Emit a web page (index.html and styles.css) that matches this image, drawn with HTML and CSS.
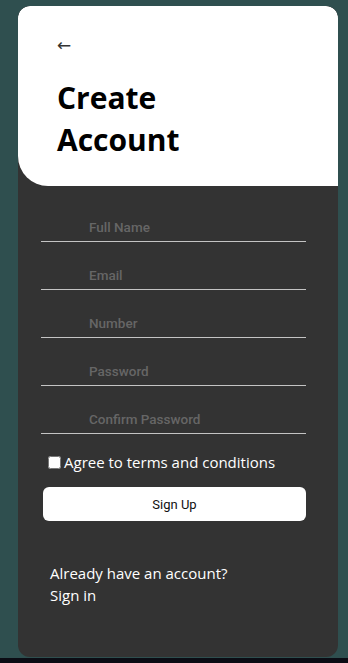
FILE: index.html
```html
<!DOCTYPE html>
<html>
<head>
  <title>Create Account</title>
  <link rel="stylesheet" href="styles.css">
</head>
<body>
  <div class="page">
    <div class="card">
      <div class="card-head">
        <a class="back" href="#">&larr;</a>
        <h1>Create<br>Account</h1>
      </div>
      <form class="card-body">
        <input class="field" type="text" placeholder="Full Name">
        <input class="field" type="email" placeholder="Email">
        <input class="field" type="tel" placeholder="Number">
        <input class="field" type="password" placeholder="Password">
        <input class="field" type="password" placeholder="Confirm Password">
        <label class="agree"><input type="checkbox">Agree to terms and conditions</label>
        <button class="signup-btn" type="button">Sign Up</button>
        <p class="login-link">Already have an account?<br>Sign in</p>
      </form>
    </div>
    <div class="spacer"></div>
    <div class="taskbar"></div>
  </div>
</body>
</html>
```

FILE: styles.css
```css
body {
  margin: 0;
  background-color: darkslategray;
  font-family: "Open Sans", sans-serif;
}
.page {
  height: 663px;
  display: flex;
  flex-direction: column;
}
.card {
  width: 320px;
  height: 651px;
  margin: 6px 0 0 18px;
  background: #333;
  border-radius: 12px;
  overflow: hidden;
}
.card-head {
  background: white;
  height: 180px;
  padding: 28px 0 0 39px;
  box-sizing: border-box;
  border-radius: 12px 12px 0 30px;
}
.back {
  display: block;
  color: #333;
  text-decoration: none;
  font-family: "DejaVu Sans", sans-serif;
  font-size: 17px;
  line-height: 22px;
}
.card-head h1 {
  margin: 21px 0 0;
  font-size: 30px;
  font-weight: 700;
  line-height: 42px;
  color: #000;
}
.card-body {
  display: flex;
  flex-direction: column;
  padding: 23px 32px 0 23px;
}
.field {
  box-sizing: border-box;
  height: 33px;
  margin-bottom: 15px;
  padding: 6px 0 2px 48px;
  background: transparent;
  border: none;
  border-bottom: 1px solid #c4c4c4;
  font-family: Roboto, sans-serif;
  font-size: 13.5px;
  font-weight: 500;
  color: #ddd;
  outline: none;
}
.field::placeholder {
  color: #666;
}
.agree {
  display: flex;
  align-items: center;
  margin: 2px 0 0 7px;
  color: white;
  font-size: 15px;
  line-height: 22px;
}
.agree input {
  width: 13px;
  height: 13px;
  margin: 0 3px 0 0;
}
.signup-btn {
  height: 34px;
  margin: 14px 0 0 2px;
  background: white;
  border: none;
  border-radius: 6px;
  font-family: Roboto, sans-serif;
  font-size: 13px;
  color: #111;
}
.login-link {
  margin: 41px 0 0 9px;
  color: white;
  font-size: 15px;
  line-height: 22px;
}
.spacer {
  flex: 1;
}
.taskbar {
  height: 5px;
  background: #0b0c14;
}
```
